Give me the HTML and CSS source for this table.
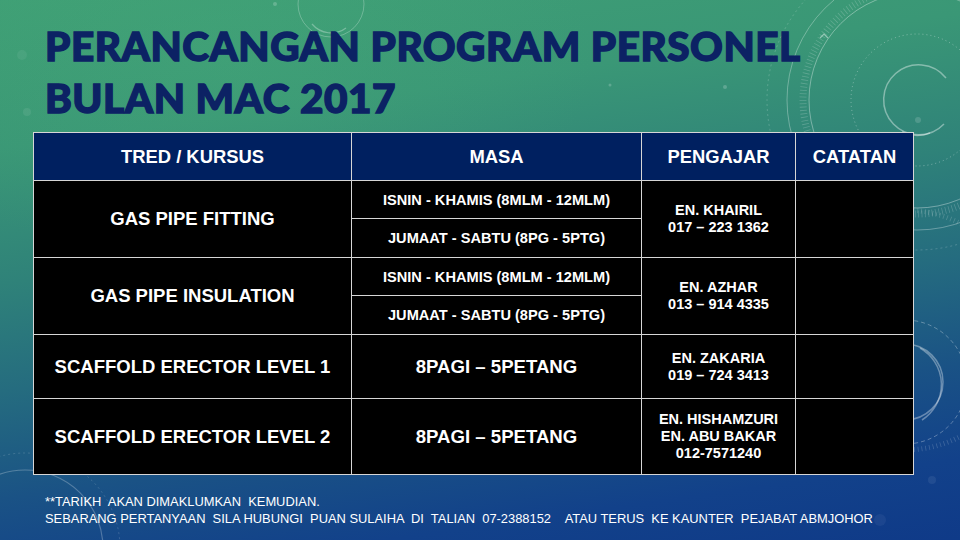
FILE: index.html
```html
<!DOCTYPE html>
<html lang="ms">
<head>
<meta charset="utf-8">
<title>Perancangan Program Personel</title>
<link rel="stylesheet" href="styles.css">
</head>
<body>
<div class="slide">
  <svg class="deco" width="960" height="540" viewBox="0 0 960 540" aria-hidden="true">
    <g fill="none" stroke="#ffffff">
      <!-- top centre small rings -->
      <circle cx="331" cy="4" r="33" stroke-opacity="0.25" stroke-width="1"/>
      <path d="M 312 24 A 25 25 0 0 0 346 28" stroke-opacity="0.3" stroke-width="1.2"/>
      <!-- top right HUD -->
      <path d="M 946 78 A 35 35 0 1 0 944 124" stroke-opacity="0.4" stroke-width="1.5"/>
      <path d="M 902 132 A 35 35 0 0 0 930 133" stroke-opacity="0.4" stroke-width="1.5"/>
      <circle cx="917" cy="100" r="66" stroke-opacity="0.35" stroke-width="1" stroke-dasharray="1 3"/>
      <circle cx="917" cy="100" r="108" stroke-opacity="0.35" stroke-width="1"/>
      <circle cx="917" cy="100" r="114" stroke-opacity="0.2" stroke-width="7" stroke-dasharray="0.8 2.6"/>
      <circle cx="917" cy="100" r="130" stroke-opacity="0.3" stroke-width="1"/>
      <circle cx="917" cy="100" r="150" stroke-opacity="0.18" stroke-width="1" stroke-dasharray="2 3"/>
      <path d="M 820 38 L 824 34 L 828 38" stroke-opacity="0.45" stroke-width="1.2"/>
      <!-- lower right HUD -->
      <circle cx="905" cy="382" r="38" stroke-opacity="0.35" stroke-width="1.5"/>
      <path d="M 920 348 A 42 42 0 0 1 922 420" stroke-opacity="0.35" stroke-width="1.5"/>
      <circle cx="905" cy="382" r="62" stroke-opacity="0.3" stroke-width="1" stroke-dasharray="4 3"/>
      <circle cx="905" cy="330" r="120" stroke-opacity="0.18" stroke-width="5" stroke-dasharray="0.8 3"/>
      <!-- lower left arcs -->
      <circle cx="25" cy="548" r="78" stroke-opacity="0.25" stroke-width="1.2"/>
      <circle cx="25" cy="548" r="95" stroke-opacity="0.15" stroke-width="1" stroke-dasharray="2 3"/>
    </g>
    <g fill="#ffffff">
      <circle cx="275" cy="4" r="2" fill-opacity="0.2"/>
      <circle cx="22" cy="55" r="5" fill-opacity="0.06"/>
      <circle cx="27" cy="112" r="4" fill-opacity="0.08"/>
      <circle cx="725" cy="87" r="2" fill-opacity="0.2"/>
      <circle cx="610" cy="85" r="1.5" fill-opacity="0.2"/>
      <circle cx="918" cy="120" r="3" fill-opacity="0.15"/>
      <circle cx="880" cy="520" r="6" fill-opacity="0.05"/>
      <circle cx="932" cy="480" r="4" fill-opacity="0.07"/>
    </g>
  </svg>

  <h1 class="title">PERANCANGAN PROGRAM PERSONEL<br>BULAN MAC 2017</h1>

  <table class="sched">
    <colgroup>
      <col class="c1"><col class="c2"><col class="c3"><col class="c4">
    </colgroup>
    <thead>
      <tr class="head">
        <th>TRED / KURSUS</th>
        <th>MASA</th>
        <th>PENGAJAR</th>
        <th>CATATAN</th>
      </tr>
    </thead>
    <tbody>
      <tr class="sub a">
        <td class="course" rowspan="2">GAS PIPE FITTING</td>
        <td class="time">ISNIN - KHAMIS (8MLM - 12MLM)</td>
        <td class="teach" rowspan="2">EN. KHAIRIL<br>017 – 223 1362</td>
        <td rowspan="2"></td>
      </tr>
      <tr class="sub b">
        <td class="time">JUMAAT - SABTU (8PG - 5PTG)</td>
      </tr>
      <tr class="sub a">
        <td class="course" rowspan="2">GAS PIPE INSULATION</td>
        <td class="time">ISNIN - KHAMIS (8MLM - 12MLM)</td>
        <td class="teach" rowspan="2">EN. AZHAR<br>013 – 914 4335</td>
        <td rowspan="2"></td>
      </tr>
      <tr class="sub b">
        <td class="time">JUMAAT - SABTU (8PG - 5PTG)</td>
      </tr>
      <tr class="r3">
        <td class="course">SCAFFOLD ERECTOR LEVEL 1</td>
        <td class="big">8PAGI – 5PETANG</td>
        <td class="teach">EN. ZAKARIA<br>019 – 724 3413</td>
        <td></td>
      </tr>
      <tr class="r4">
        <td class="course">SCAFFOLD ERECTOR LEVEL 2</td>
        <td class="big">8PAGI – 5PETANG</td>
        <td class="teach">EN. HISHAMZURI<br>EN. ABU BAKAR<br>012-7571240</td>
        <td></td>
      </tr>
    </tbody>
  </table>

  <p class="note">**TARIKH  AKAN DIMAKLUMKAN  KEMUDIAN.<br>SEBARANG PERTANYAAN  SILA HUBUNGI  PUAN SULAIHA  DI  TALIAN  07-2388152    ATAU TERUS  KE KAUNTER  PEJABAT ABMJOHOR</p>
</div>
</body>
</html>
```

FILE: styles.css
```css
* { box-sizing: border-box; }

html, body {
  margin: 0;
  padding: 0;
  background: #123a82;
}

.slide {
  position: relative;
  width: 960px;
  height: 540px;
  overflow: hidden;
  padding: 20px 0 0 33px;
  background:
    radial-gradient(ellipse 520px 300px at 230px 60px, rgba(70, 170, 120, 0.35), rgba(70, 170, 120, 0) 70%),
    linear-gradient(172deg, #3f9f75 0%, #3a9776 22%, #2f8279 42%, #256c7f 58%, #1a5285 74%, #12418a 88%, #0f3a88 100%);
  font-family: "Liberation Sans", Arial, sans-serif;
  color: #ffffff;
}

.deco {
  position: absolute;
  left: 0;
  top: 0;
  z-index: 0;
}

.title {
  position: relative;
  z-index: 1;
  margin: 0 0 0 12px;
  font-family: Lato, "Open Sans", sans-serif;
  font-weight: 900;
  font-size: 40.5px;
  line-height: 52px;
  letter-spacing: 0.5px;
  color: #0c2264;
  -webkit-text-stroke: 1.4px #0c2264;
}

.sched {
  position: relative;
  z-index: 1;
  margin-top: 8px;
  width: 880px;
  border-collapse: collapse;
  table-layout: fixed;
  background: #000000;
  font-weight: bold;
  text-align: center;
}

.c1 { width: 318px; }
.c2 { width: 290px; }
.c3 { width: 154px; }
.c4 { width: 118px; }

.sched th,
.sched td {
  border: 1px solid #d6d6d6;
  padding: 0 4px;
  vertical-align: middle;
  color: #ffffff;
}

.head { height: 48px; }
.head th {
  background: #002060;
  font-size: 18.4px;
  font-weight: bold;
}

.sub.a { height: 38px; }
.sub.b { height: 39px; }
.r3 { height: 64px; }
.r4 { height: 76px; }

.course {
  font-size: 18.5px;
}

.time {
  font-size: 14.6px;
}

.big {
  font-size: 18.6px;
}

.teach {
  font-size: 14.5px;
  line-height: 17px;
}

.note {
  position: relative;
  z-index: 1;
  margin: 18px 0 0 12px;
  font-size: 12.9px;
  line-height: 17px;
  white-space: pre;
  color: #ffffff;
}
```
